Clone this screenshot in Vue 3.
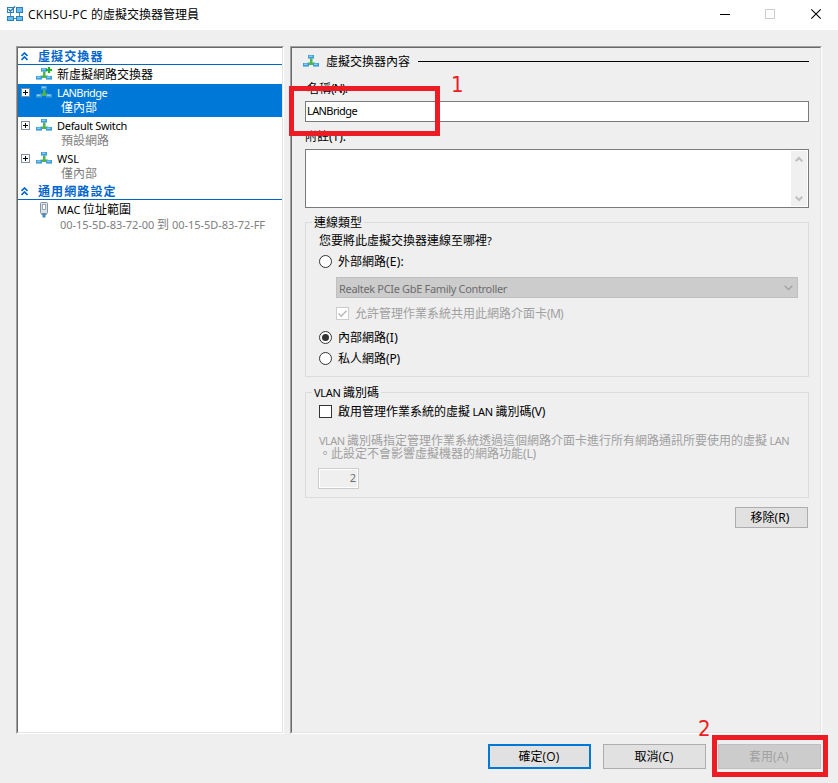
<script setup>
import { h, ref, onMounted } from 'vue'

// Text line that sets Latin and CJK runs in their own faces and spreads
// the Latin runs so that the line takes the given width.
const Run = {
  props: { text: String, w: Number },
  setup(props) {
    const el = ref(null)
    const gap = ref(0)
    const parts = props.text.match(/[\x20-\x7e]+|[^\x20-\x7e]+/g) || []
    const isLatin = (s) => /^[\x20-\x7e]/.test(s)
    onMounted(() => {
      if (!props.w) return
      const count = parts.filter(isLatin).join('').length
      if (count) gap.value = (props.w - el.value.getBoundingClientRect().width) / count
    })
    return () =>
      h('span', { ref: el, class: 'run' }, parts.map((p) =>
        isLatin(p)
          ? h('span', { class: ['run-latin', { 'run-key': /^\([A-Z]\)/.test(p) }], style: { letterSpacing: gap.value + 'px' } }, p)
          : p
      ))
  }
}

const NetIcon = (props) =>
  h('svg', { class: 'net-icon', width: 17, height: 15, viewBox: '0 0 17 15' }, [
    h('path', { d: 'M7 4.500h2.500v4h2.500v2.500H4.500V8.500H7z', fill: '#4fb548' }),
    h('rect', { x: 5, y: 1, width: 6, height: 3.6, fill: '#3d9ddb' }),
    h('rect', { x: 6, y: 1.6, width: 3.5, height: 1.4, fill: '#86ccf5' }),
    h('rect', { x: 0, y: 9, width: 6, height: 3.6, fill: '#3d9ddb' }),
    h('rect', { x: 1, y: 9.6, width: 3.5, height: 1.4, fill: '#86ccf5' }),
    h('rect', { x: 10, y: 9, width: 6, height: 3.6, fill: '#3d9ddb' }),
    h('rect', { x: 11, y: 9.6, width: 3.5, height: 1.4, fill: '#86ccf5' }),
    props.plus ? h('path', { d: 'M13 0v6M10 3h6', stroke: '#22b022', 'stroke-width': 2.2 }) : null
  ])
NetIcon.props = ['plus']

const switches = [
  { name: 'LANBridge', w: 50, sub: '僅內部', selected: true },
  { name: 'Default Switch', w: 70, sub: '預設網路' },
  { name: 'WSL', w: 22, sub: '僅內部' }
]
</script>

<template>
  <div class="window">
    <header class="titlebar">
      <svg class="app-icon" width="17" height="16" viewBox="0 0 17 16">
        <g fill="#67bdf0" stroke="#2c80b8" stroke-width="1">
          <rect x="0.5" y="1.5" width="6" height="5" fill="#e8f4fb" />
          <rect x="9.5" y="1.5" width="6" height="5" />
          <rect x="0.5" y="10.5" width="6" height="4" />
          <rect x="9.5" y="10.5" width="6" height="4" />
        </g>
        <path d="M3.500 7v3M12.500 7v3M7 12.500h2" stroke="#4a90bd" />
        <path d="M1.500 3l2 2.300L8 0.300" fill="none" stroke="#2d76bd" stroke-width="1.300" />
      </svg>
      <h1 class="title ui"><Run text="CKHSU-PC 的虛擬交換器管理員" :w="171" /></h1>
      <svg class="controls" width="103" height="12" viewBox="0 0 103 12">
        <path d="M0 6.500h10" stroke="#000" />
        <rect x="45.500" y="1.500" width="9" height="9" fill="none" stroke="#ccc" />
        <path d="M91.300 1.300l9.400 9.400M100.700 1.300l-9.400 9.400" stroke="#000" stroke-width="1.100" />
      </svg>
    </header>

    <main class="panes">
      <nav class="pane tree">
        <div class="inner">
          <div class="section">
            <svg class="chev" width="7" height="9" viewBox="0 0 7 9"><path d="M.5 4L3.500 1l3 3M.5 8l3-3 3 3" /></svg>
            虛擬交換器
          </div>
          <div class="new-row"><NetIcon :plus="true" /><span>新虛擬網路交換器</span></div>
          <div v-for="s in switches" :key="s.name" class="item" :class="{ selected: s.selected }">
            <svg class="expander" width="9" height="9" viewBox="0 0 9 9">
              <rect x="0.5" y="0.5" width="8" height="8" fill="#fff" stroke="#8291a8" />
              <path d="M2 4.500h5M4.500 2v5" stroke="#000" />
            </svg>
            <NetIcon />
            <div class="item-text">
              <Run :text="s.name" :w="s.w" />
              <span class="sub">{{ s.sub }}</span>
            </div>
          </div>
          <div class="section">
            <svg class="chev" width="7" height="9" viewBox="0 0 7 9"><path d="M.5 4L3.500 1l3 3M.5 8l3-3 3 3" /></svg>
            通用網路設定
          </div>
          <div class="item mac">
            <svg class="mac-icon" width="10" height="17" viewBox="0 0 10 17">
              <rect x="1.500" y="0.500" width="7" height="11" rx="1" fill="#dbe3ea" stroke="#8493a2" />
              <rect x="3.500" y="2.500" width="3" height="5" fill="#fff" stroke="#9aa6b1" />
              <path d="M2.500 11.500h5v1.500h-5z" fill="#5c8bb3" />
              <path d="M5 12.500v3" stroke="#4688bb" stroke-width="3" />
            </svg>
            <div class="item-text">
              <Run text="MAC 位址範圍" :w="74" />
              <span class="sub"><Run text="00-15-5D-83-72-00 到 00-15-5D-83-72-FF" :w="205" /></span>
            </div>
          </div>
        </div>
      </nav>

      <section class="pane detail">
        <div class="inner">
          <div class="heading"><NetIcon /><span>虛擬交換器內容</span><i class="rule"></i></div>
          <label class="label name-label"><Run text="名稱(N):" :w="40" /></label>
          <div class="input"><Run text="LANBridge" :w="50" /></div>
          <label class="label"><Run text="附註(T):" :w="41" /></label>
          <div class="textarea">
            <div class="scroll">
              <svg width="8" height="7" viewBox="0 0 8 7"><path d="M.7 5.300L4 2l3.300 3.300" /></svg>
              <svg width="8" height="7" viewBox="0 0 8 7"><path d="M.7 1.700L4 5l3.300-3.300" /></svg>
            </div>
          </div>

          <div class="group connection">
            <span class="legend">連線類型</span>
            <p class="question"><Run text="您要將此虛擬交換器連線至哪裡?" :w="174" /></p>
            <div class="option"><i class="radio"></i><Run text="外部網路(E):" :w="66" /></div>
            <div class="combo">
              <Run text="Realtek PCIe GbE Family Controller" :w="168" />
              <svg width="9" height="6" viewBox="0 0 9 6"><path d="M.7 .8l3.800 3.800L8.300 .8" /></svg>
            </div>
            <div class="share">
              <svg class="check" width="13" height="13" viewBox="0 0 13 13">
                <rect x=".5" y=".5" width="12" height="12" /><path d="M2.500 6.500l2.700 2.700 5.300-5.500" />
              </svg>
              <Run text="允許管理作業系統共用此網路介面卡(M)" :w="208" />
            </div>
            <div class="option internal"><i class="radio on"></i><Run text="內部網路(I)" :w="60" /></div>
            <div class="option private"><i class="radio"></i><Run text="私人網路(P)" :w="62" /></div>
          </div>

          <div class="group vlan">
            <span class="legend"><Run text="VLAN 識別碼" :w="65" /></span>
            <div class="option"><i class="box"></i><Run text="啟用管理作業系統的虛擬 LAN 識別碼(V)" :w="207" /></div>
            <p class="note">
              <Run text="VLAN 識別碼指定管理作業系統透過這個網路介面卡進行所有網路通訊所要使用的虛擬 LAN" :w="470" />
              <Run text="。此設定不會影響虛擬機器的網路功能(L)" :w="217" />
            </p>
            <div class="number"><Run text="2" /></div>
          </div>
          <button class="button remove"><Run text="移除(R)" :w="39" /></button>
        </div>
      </section>
    </main>

    <footer class="actions ui">
      <button class="button primary"><Run text="確定(O)" :w="41" /></button>
      <button class="button"><Run text="取消(C)" :w="39" /></button>
      <button class="button disabled"><Run text="套用(A)" :w="40" /></button>
    </footer>

    <div class="mark mark-one"></div>
    <span class="digit digit-one">1</span>
    <div class="mark mark-two"></div>
    <span class="digit digit-two">2</span>
  </div>
</template>

<style>
body { background: #efefef; overflow: hidden; }
.run { white-space: pre; display: inline-block; }
.run-latin { font-family: "Noto Sans", sans-serif; font-size: 11px; line-height: 1; }
.run-key { font-size: 12px; }
.ui .run-latin { font-family: "Open Sans", sans-serif; font-size: 12px; }
.net-icon { flex: none; display: block; }
</style>

<style scoped>
.window {
  position: relative; box-sizing: border-box; width: 838px; height: 783px;
  background: #efefef; color: #000; overflow: hidden;
  font: 12px/14px "Noto Sans CJK TC", sans-serif;
  display: flex; flex-direction: column;
}
.window * { box-sizing: border-box; }
.titlebar { height: 30px; flex: none; background: #fff; display: flex; align-items: center; padding: 0 15px 2px 7px; }
.title { margin: 0 auto 0 4px; font-size: 12px; font-weight: 400; line-height: 16px; }
.controls { flex: none; }
.panes { display: flex; gap: 6px; height: 688px; margin: 16px 16px 0; flex: none; }
.pane { border: 1px solid; border-color: #a0a0a0 #fff #fff #a0a0a0; }
.inner { height: 100%; border: 1px solid; border-color: #696969 #e3e3e3 #e3e3e3 #696969; }
.tree { width: 268px; }
.tree .inner { background: #fff; }
.detail { width: 532px; }
.detail .inner { padding: 5px 11px 0 13px; display: flex; flex-direction: column; }

.section {
  height: 17px; border-bottom: 1px solid #0066cc; color: #0066cc; font-weight: 700;
  letter-spacing: 1.1px; display: flex; align-items: center; gap: 10px; padding-left: 3px;
}
.chev { fill: none; stroke: #0066cc; stroke-width: 1.6; }
.new-row { height: 19px; display: flex; align-items: center; gap: 4px; padding: 0 0 1px 18px; }
.item { height: 33px; display: flex; padding-left: 3px; }
.expander { margin: 4px 6px 0 0; }
.item .net-icon { margin-top: 1px; }
.item-text { display: flex; flex-direction: column; align-items: flex-start; padding: 1px 0 0 4px; }
.sub { color: #808080; padding-left: 4px; margin-top: 1px; }
.selected { background: #0078d7; color: #fff; }
.selected .sub { color: #fff; }
.mac { padding-left: 21px; padding-top: 1px; }
.mac .item-text { padding-left: 8px; }
.mac-icon { margin-top: 1px; }
.mac .sub { padding-left: 3px; }

.heading { height: 16px; display: flex; align-items: center; margin-left: -2px; flex: none; }
.heading span { margin: -1px 0 0 6px; }
.rule { flex: 1; height: 1px; background: #000; margin-left: 8px; }
.label { height: 14px; flex: none; }
.name-label { margin: 12px 0 6px 2px; }
.input { height: 21px; border: 1px solid #7a7a7a; background: #fff; padding: 1px 1px; flex: none; }
.input + .label { margin-top: 7px; }
.textarea { height: 59px; margin-top: 6px; border: 1px solid #7a7a7a; background: #fff; display: flex; justify-content: flex-end; padding: 1px; flex: none; }
.scroll { width: 16px; background: #f0f0f0; display: flex; flex-direction: column; align-items: center; justify-content: space-between; padding: 5px 1px 4px 0; }
.scroll svg { fill: none; stroke: #bfbfbf; stroke-width: 2; }

.group { border: 1px solid #dcdcdc; flex: none; display: flex; flex-direction: column; align-items: flex-start; }
.legend { background: #efefef; height: 14px; margin: -8px 0 0 6px; padding: 0 2px; }
.connection { height: 155px; margin-top: 14px; padding-right: 10px; }
.question { margin: 4px 0 0 13px; height: 14px; }
.option { display: flex; align-items: center; height: 13px; margin-left: 13px; gap: 6px; }
.option .run, .share .run { margin-top: -1px; }
.connection .option { margin-top: 8px; }
.radio { width: 13px; height: 13px; border-radius: 50%; border: 1px solid #333; background: #fff; display: flex; }
.radio.on::after { content: ''; width: 7px; height: 7px; margin: 2px; border-radius: 50%; background: #333; }
.combo {
  align-self: stretch; height: 21px; margin: 9px 0 0 30px; background: #ccc; border: 1px solid #bfbfbf;
  color: #6d6d6d; display: flex; align-items: center; justify-content: space-between; padding: 0 4px 0 2px;
}
.combo svg { fill: none; stroke: #a0a0a0; stroke-width: 1.3; }
.share { display: flex; align-items: center; height: 13px; margin: 9px 0 0 30px; gap: 6px; color: #a0a0a0; }
.check { fill: #fff; stroke: #ccc; }
.check path { fill: none; stroke: #b8b8b8; stroke-width: 1.4; }
.connection .internal { margin-top: 11px; }
.connection .private { margin-top: 8px; }
.vlan { height: 106px; margin-top: 15px; }
.vlan .option { margin-top: 6px; }
.box { width: 13px; height: 13px; border: 1px solid #333; background: #fff; }
.note { margin: 15px 0 0 13px; color: #a0a0a0; display: flex; flex-direction: column; align-items: flex-start; line-height: 13px; }
.number { width: 41px; height: 21px; margin: 8px 0 0 12px; border: 1px solid #ccc; box-shadow: inset 0 0 0 1px #fff; color: #6d6d6d; text-align: right; padding: 1px 2px 0 0; }

.button {
  font: inherit; color: #000; padding: 0 0 1px; border: 1px solid #adadad; border-radius: 0; background: #e1e1e1;
  display: flex; align-items: center; justify-content: center;
}
.remove { width: 73px; height: 21px; align-self: flex-end; margin: 9px 1px 0 0; padding-right: 3px; }
.actions { display: flex; gap: 12px; justify-content: flex-end; padding: 10px 17px 0 0; }
.actions .button { width: 103px; height: 25px; padding-right: 1px; padding-bottom: 2px; }
.actions .primary { border: 2px solid #0078d7; }
.actions .disabled { background: #ccc; border-color: #bfbfbf; color: #a0a0a0; }

/* Callouts drawn over the dialog */
.mark { position: absolute; border: 5px solid #ed1c24; }
.mark-one { left: 289px; top: 86px; width: 151px; height: 50px; }
.mark-two { left: 712px; top: 735px; width: 116px; height: 42px; }
.digit { position: absolute; color: #ed1c24; font: 22px/24px "DejaVu Sans Condensed", "DejaVu Sans", sans-serif; }
.digit-one { left: 451px; top: 73px; }
.digit-two { left: 698px; top: 717px; }
</style>
